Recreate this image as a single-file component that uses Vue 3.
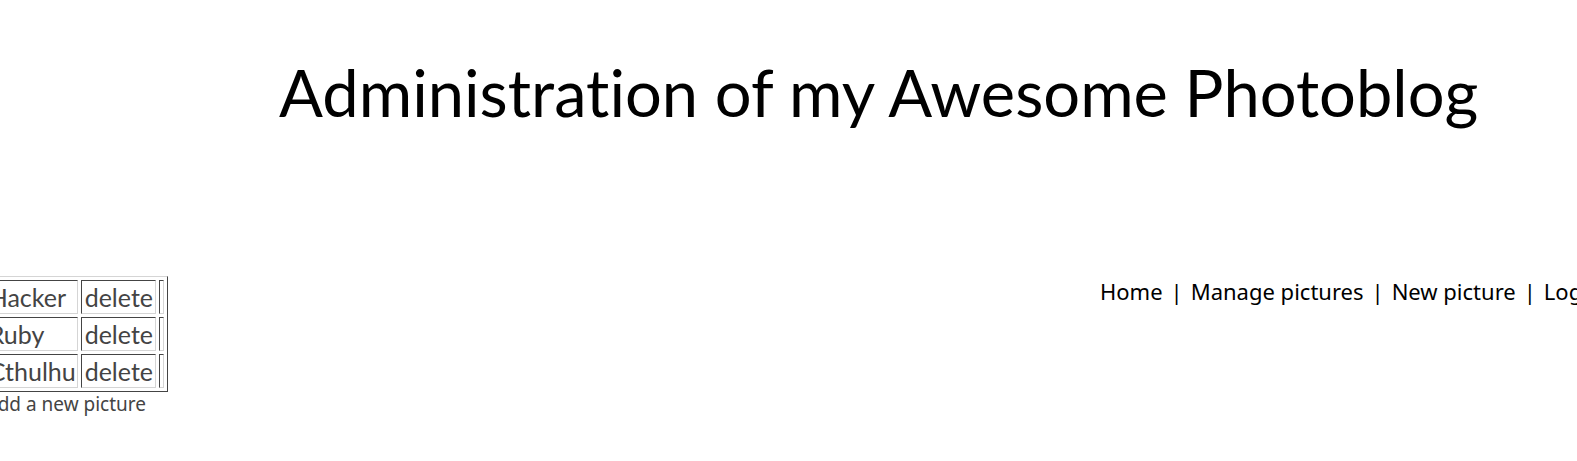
<script setup>
const pictures = [
  { id: 1, name: 'Hacker' },
  { id: 2, name: 'Ruby' },
  { id: 3, name: 'Cthulhu' }
]
const links = ['Home', 'Manage pictures', 'New picture', 'Log']
</script>

<template>
  <div class="page">
    <header class="header">
      <h1>Administration of my Awesome Photoblog</h1>
    </header>
    <div class="content">
      <main class="pictures">
        <table>
          <tbody>
            <tr v-for="picture in pictures" :key="picture.id">
              <td>{{ picture.name }}</td>
              <td class="action"><a href="#">delete</a></td>
              <td class="spare"></td>
            </tr>
          </tbody>
        </table>
        <a class="add" href="#">add a new picture</a>
      </main>
      <nav>
        <template v-for="(link, i) in links" :key="link">
          <span v-if="i" class="bar">|</span>
          <a href="#">{{ link }}</a>
        </template>
      </nav>
    </div>
  </div>
</template>

<style>
body {
  margin: 0;
  background: #fff;
}
</style>

<style scoped>
.page {
  overflow: hidden;
  font-family: "Trebuchet MS", "Noto Sans", sans-serif;
  font-variant-ligatures: none;
  color: #444;
}
a {
  color: inherit;
  text-decoration: none;
}
.header {
  padding: 52px 104px 144px 279px;
}
h1 {
  margin: 0;
  font-family: "Trebuchet MS", Lato, sans-serif;
  font-size: 65px;
  line-height: 80px;
  font-weight: 400;
  color: #000;
  white-space: nowrap;
}
.content {
  display: flex;
  justify-content: space-between;
  align-items: flex-start;
}
.pictures {
  width: 168px;
  display: flex;
  flex-direction: column;
  align-items: flex-end;
}
table {
  border: 1px solid;
  border-color: #d5d5d5 #444 #444 #d5d5d5;
  border-collapse: separate;
  border-spacing: 3px;
  font-family: "Trebuchet MS", Lato, sans-serif;
  font-size: 25px;
  line-height: 32px;
}
td {
  border: 1px solid;
  border-color: #444 #d5d5d5 #d5d5d5 #444;
  padding: 0 1px 0 2px;
}
.action {
  padding: 0 2px 0 3px;
}
.add {
  margin-right: 22px;
  font-size: 19px;
  line-height: 24px;
  white-space: nowrap;
}
nav {
  display: flex;
  width: 477px;
  overflow: hidden;
  font-size: 22px;
  line-height: 30px;
  color: #000;
  white-space: nowrap;
}
.bar {
  margin: 0 8px;
}
</style>
